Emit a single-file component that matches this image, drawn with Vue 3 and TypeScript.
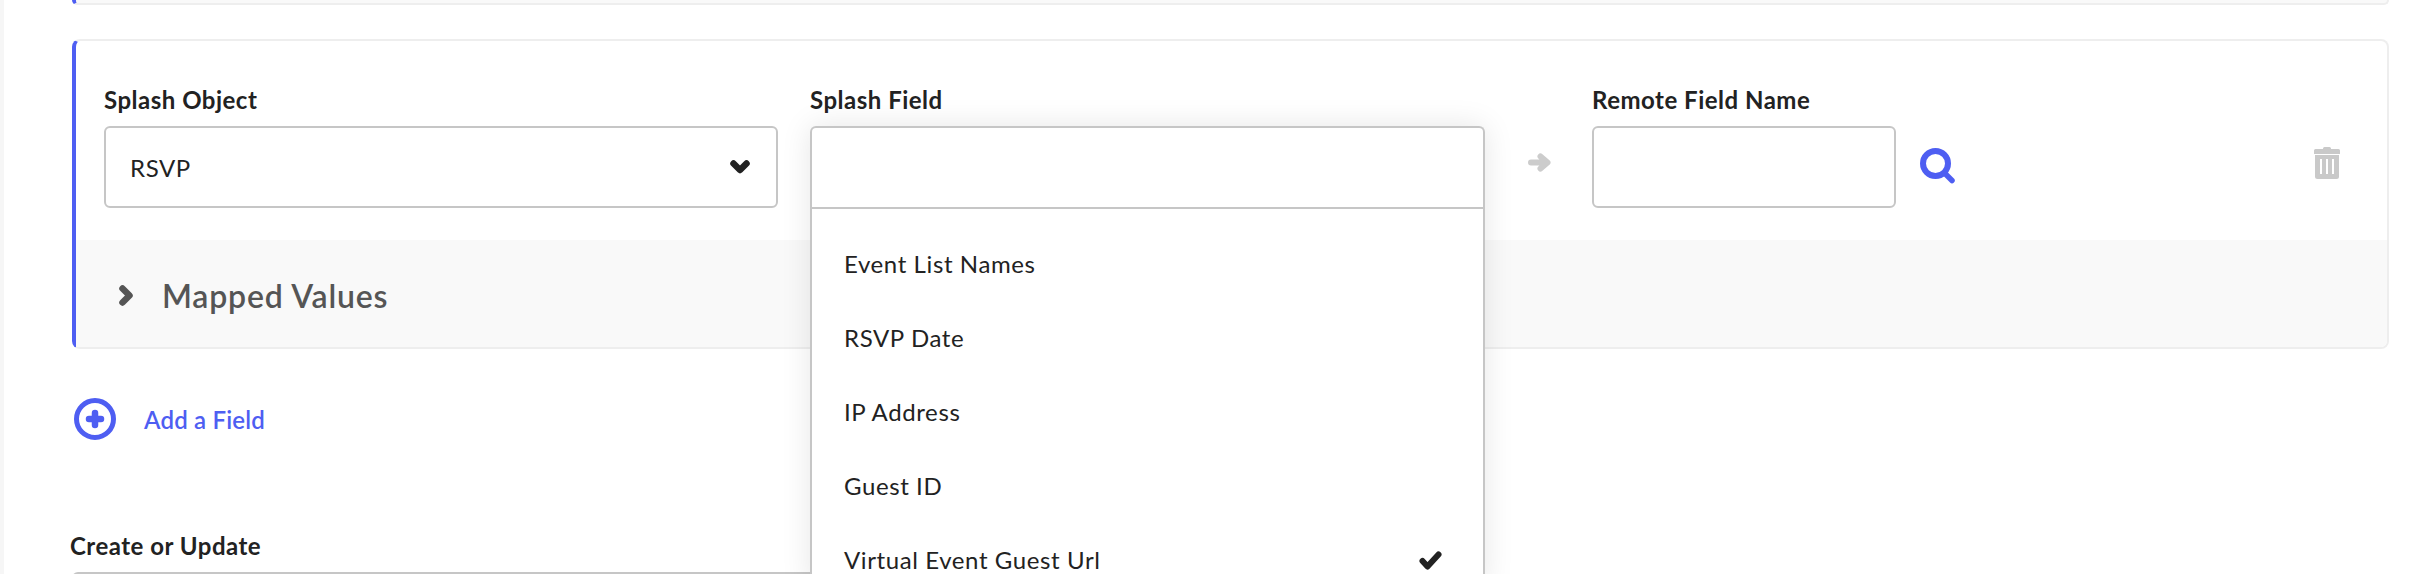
<template>
  <div class="page">
    <div class="card-prev"></div>

    <section class="card">
      <div class="fields">
        <div class="field object">
          <label>Splash Object</label>
          <div class="box select">
            <span>{{ objectName }}</span>
            <svg class="chev-down" viewBox="0 0 20 14"><path d="M3.500 3.500L10 10l6.500-6.500" /></svg>
          </div>
        </div>

        <div class="field splash">
          <label>Splash Field</label>
          <div class="dropdown">
            <div class="search-box"></div>
            <ul class="options">
              <li v-for="o in options" :key="o.label">
                {{ o.label }}
                <svg v-if="o.selected" class="check" viewBox="0 0 23 19"><path d="M3.500 10l5 5.500L19.500 3.500" /></svg>
              </li>
            </ul>
          </div>
        </div>

        <svg class="arrow" viewBox="0 0 23 19"><path d="M3 9.500h16M12.500 3.500l7 6-7 6" /></svg>

        <div class="field remote">
          <label>Remote Field Name</label>
          <div class="box"></div>
        </div>

        <svg class="search" viewBox="0 0 36 38">
          <circle cx="15.500" cy="15.500" r="12.500" />
          <path d="M25 25.500l7 7" />
        </svg>

        <svg class="trash" viewBox="0 0 26 33">
          <path d="M9 2.500a1.500 1.500 0 0 1 1.500-1.500h5A1.500 1.500 0 0 1 17 2.500V3h7.500A1.500 1.500 0 0 1 26 4.500V8H0V4.500A1.500 1.500 0 0 1 1.500 3H9z" />
          <path fill-rule="evenodd" d="M1 9h24v21.500a2.500 2.500 0 0 1-2.500 2.500h-19A2.500 2.500 0 0 1 1 30.500zM6 13v15h2V13zM12 13v15h2V13zM18 13v15h2V13z" />
        </svg>
      </div>

      <div class="mapped">
        <svg class="chev-right" viewBox="0 0 14 21"><path d="M3.500 3.500l7 7-7 7" /></svg>
        <span>Mapped Values</span>
      </div>
    </section>

    <div class="add-row">
      <svg class="plus" viewBox="0 0 42 42">
        <circle cx="21" cy="21" r="18.500" />
        <path d="M21 15v12M15 21h12" />
      </svg>
      <a>Add a Field</a>
    </div>

    <div class="create">
      <label>Create or Update</label>
      <div class="box"></div>
    </div>
  </div>
</template>

<script setup lang="ts">
const objectName = 'RSVP'

const options = [
  { label: 'Event List Names' },
  { label: 'RSVP Date' },
  { label: 'IP Address' },
  { label: 'Guest ID' },
  { label: 'Virtual Event Guest Url', selected: true },
]
</script>

<style>
html, body { margin: 0; background: #fff; overflow: hidden; }
</style>

<style scoped>
.page {
  height: 574px;
  overflow: hidden;
  box-sizing: border-box;
  border-left: 4px solid #f6f6f6;
  padding: 0 27px 0 68px;
  font-family: Lato, "Liberation Sans", sans-serif;
  color: #222;
  font-size: 24px;
  letter-spacing: 0.6px;
}
.card-prev {
  height: 5px;
  box-sizing: border-box;
  background: #f9f9f9;
  border: 2px solid #eee;
  border-top: 0;
  border-left: 4px solid #4e5ef2;
  border-radius: 0 0 8px 8px;
}
.card {
  margin-top: 34px;
  height: 310px;
  box-sizing: border-box;
  border: 2px solid #eee;
  border-left: 4px solid #4e5ef2;
  border-radius: 8px;
  display: flex;
  flex-direction: column;
}
.fields {
  height: 199px;
  display: flex;
  align-items: flex-start;
  padding-top: 46px;
  padding-left: 28px;
  box-sizing: border-box;
  flex: none;
}
.field label, .create label {
  display: block;
  font-weight: 700;
  font-size: 24px;
  line-height: 26px;
  color: #222;
  margin-bottom: 13px;
  letter-spacing: 0.5px;
}
.box {
  height: 82px;
  box-sizing: border-box;
  border: 2px solid #c6c6c6;
  border-radius: 6px;
  background: #fff;
}
.object { width: 674px; }
.select {
  display: flex;
  align-items: center;
  justify-content: space-between;
  padding: 0 26px 0 24px;
}
.chev-down { width: 20px; height: 14px; fill: none; stroke: #222; stroke-width: 6.500; stroke-linejoin: round; stroke-linecap: round; }
.splash { width: 675px; margin-left: 32px; position: relative; z-index: 2; }
.dropdown {
  border: 2px solid #c6c6c6;
  border-bottom: 0;
  border-radius: 6px 6px 0 0;
  background: #fff;
  box-shadow: 0 0 30px rgba(0, 0, 0, 0.1);
  height: 460px;
  box-sizing: border-box;
}
.search-box {
  height: 79px;
  border-bottom: 2px solid #c6c6c6;
}
.options {
  list-style: none;
  margin: 0;
  padding: 18px 0 0;
}
.options li {
  height: 74px;
  line-height: 74px;
  padding: 0 41px 0 32px;
  display: flex;
  justify-content: space-between;
  align-items: center;
}
.check { width: 23px; height: 19px; fill: none; stroke: #222; stroke-width: 6; stroke-linecap: round; stroke-linejoin: round; }
.arrow { width: 23px; height: 19px; fill: none; stroke: #ccc; stroke-width: 6; stroke-linecap: round; stroke-linejoin: round; margin: 66px 41px 0 43px; flex: none; }
.remote { width: 304px; }
.search {
  width: 36px;
  height: 38px;
  margin: 61px 0 0 24px;
  fill: none;
  stroke: #4e5ef2;
  flex: none;
}
.search circle { stroke-width: 6; }
.search path { stroke-width: 5.500; stroke-linecap: round; }
.trash { width: 26px; height: 33px; fill: #c9c9c9; margin: 59px 0 0 358px; flex: none; }
.mapped {
  flex: 1;
  background: #f9f9f9;
  display: flex;
  align-items: center;
  padding-left: 43px;
  padding-top: 3px;
  border-radius: 0 0 6px 0;
  color: #555;
  font-size: 32px;
  font-weight: 600;
  letter-spacing: 0.8px;
}
.chev-right { width: 14px; height: 21px; fill: none; stroke: #555; stroke-width: 6.500; stroke-linejoin: round; stroke-linecap: round; margin-right: 29px; }
.add-row {
  display: flex;
  align-items: center;
  height: 42px;
  margin-top: 49px;
  margin-left: 2px;
  color: #4e5ef2;
  font-size: 24px;
  font-weight: 600;
  letter-spacing: 0.2px;
}
.plus { width: 42px; height: 42px; fill: none; stroke: #4e5ef2; margin-right: 28px; }
.plus circle { stroke-width: 5; }
.plus path { stroke-width: 6.500; stroke-linecap: round; }
.create { margin-top: 93px; margin-left: -2px; width: 780px; }
.create label { margin-bottom: 13px; }
.create .box { margin-left: 2px; }
</style>
